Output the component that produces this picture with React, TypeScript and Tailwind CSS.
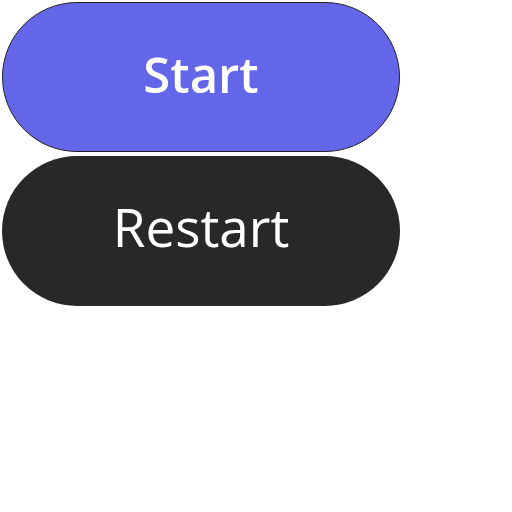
import React from 'react';

const App = () => {
  return (
    <div className="flex flex-col items-start gap-1 p-0.5 font-['Open_Sans',sans-serif]">
      {/* Start */}
      <button className="flex h-[150px] w-[398px] items-center justify-center rounded-full border border-[#222] bg-[#6366e8] pb-1 text-[49px] font-semibold text-white">
        Start
      </button>
      {/* Restart */}
      <button className="flex h-[150px] w-[398px] items-center justify-center rounded-full bg-[#282828] pb-2 text-[53px] font-normal text-white">
        Restart
      </button>
    </div>
  );
};

export default App;
